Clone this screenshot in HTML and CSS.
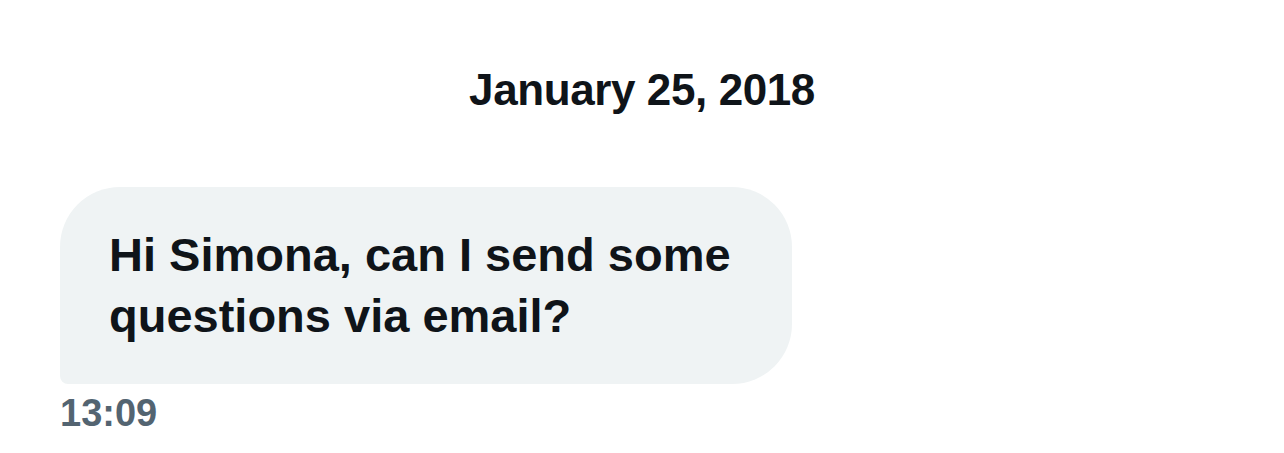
FILE: index.html
```html
<!DOCTYPE html>
<html>
<head>
<meta charset="utf-8">
<link rel="stylesheet" href="styles.css">
</head>
<body>
<main class="chat">
  <div class="date">January 25, 2018</div>
  <div class="message">
    <div class="bubble">Hi Simona, can I send some questions via email?</div>
    <div class="time">13:09</div>
  </div>
</main>
</body>
</html>
```
FILE: styles.css
```css
html, body {
  margin: 0;
  padding: 0;
  background: #ffffff;
}
.chat {
  font-family: "Liberation Sans", Arial, sans-serif;
  color: #0f1419;
  padding: 62px 60px 0 60px;
  display: flex;
  flex-direction: column;
}
.date {
  text-align: center;
  font-weight: 700;
  font-size: 44px;
  letter-spacing: -0.4px;
  line-height: 56px;
}
.message {
  margin-top: 69px;
  display: flex;
  flex-direction: column;
  align-items: flex-start;
}
.bubble {
  box-sizing: border-box;
  width: 732px;
  height: 197px;
  background: #eff3f4;
  border-radius: 60px 60px 60px 8px;
  padding: 37px 40px 0 49px;
  font-weight: 700;
  font-size: 47px;
  line-height: 61px;
}
.time {
  margin-top: 9px;
  font-size: 38px;
  line-height: 40px;
  font-weight: 700;
  color: #536471;
}
```
